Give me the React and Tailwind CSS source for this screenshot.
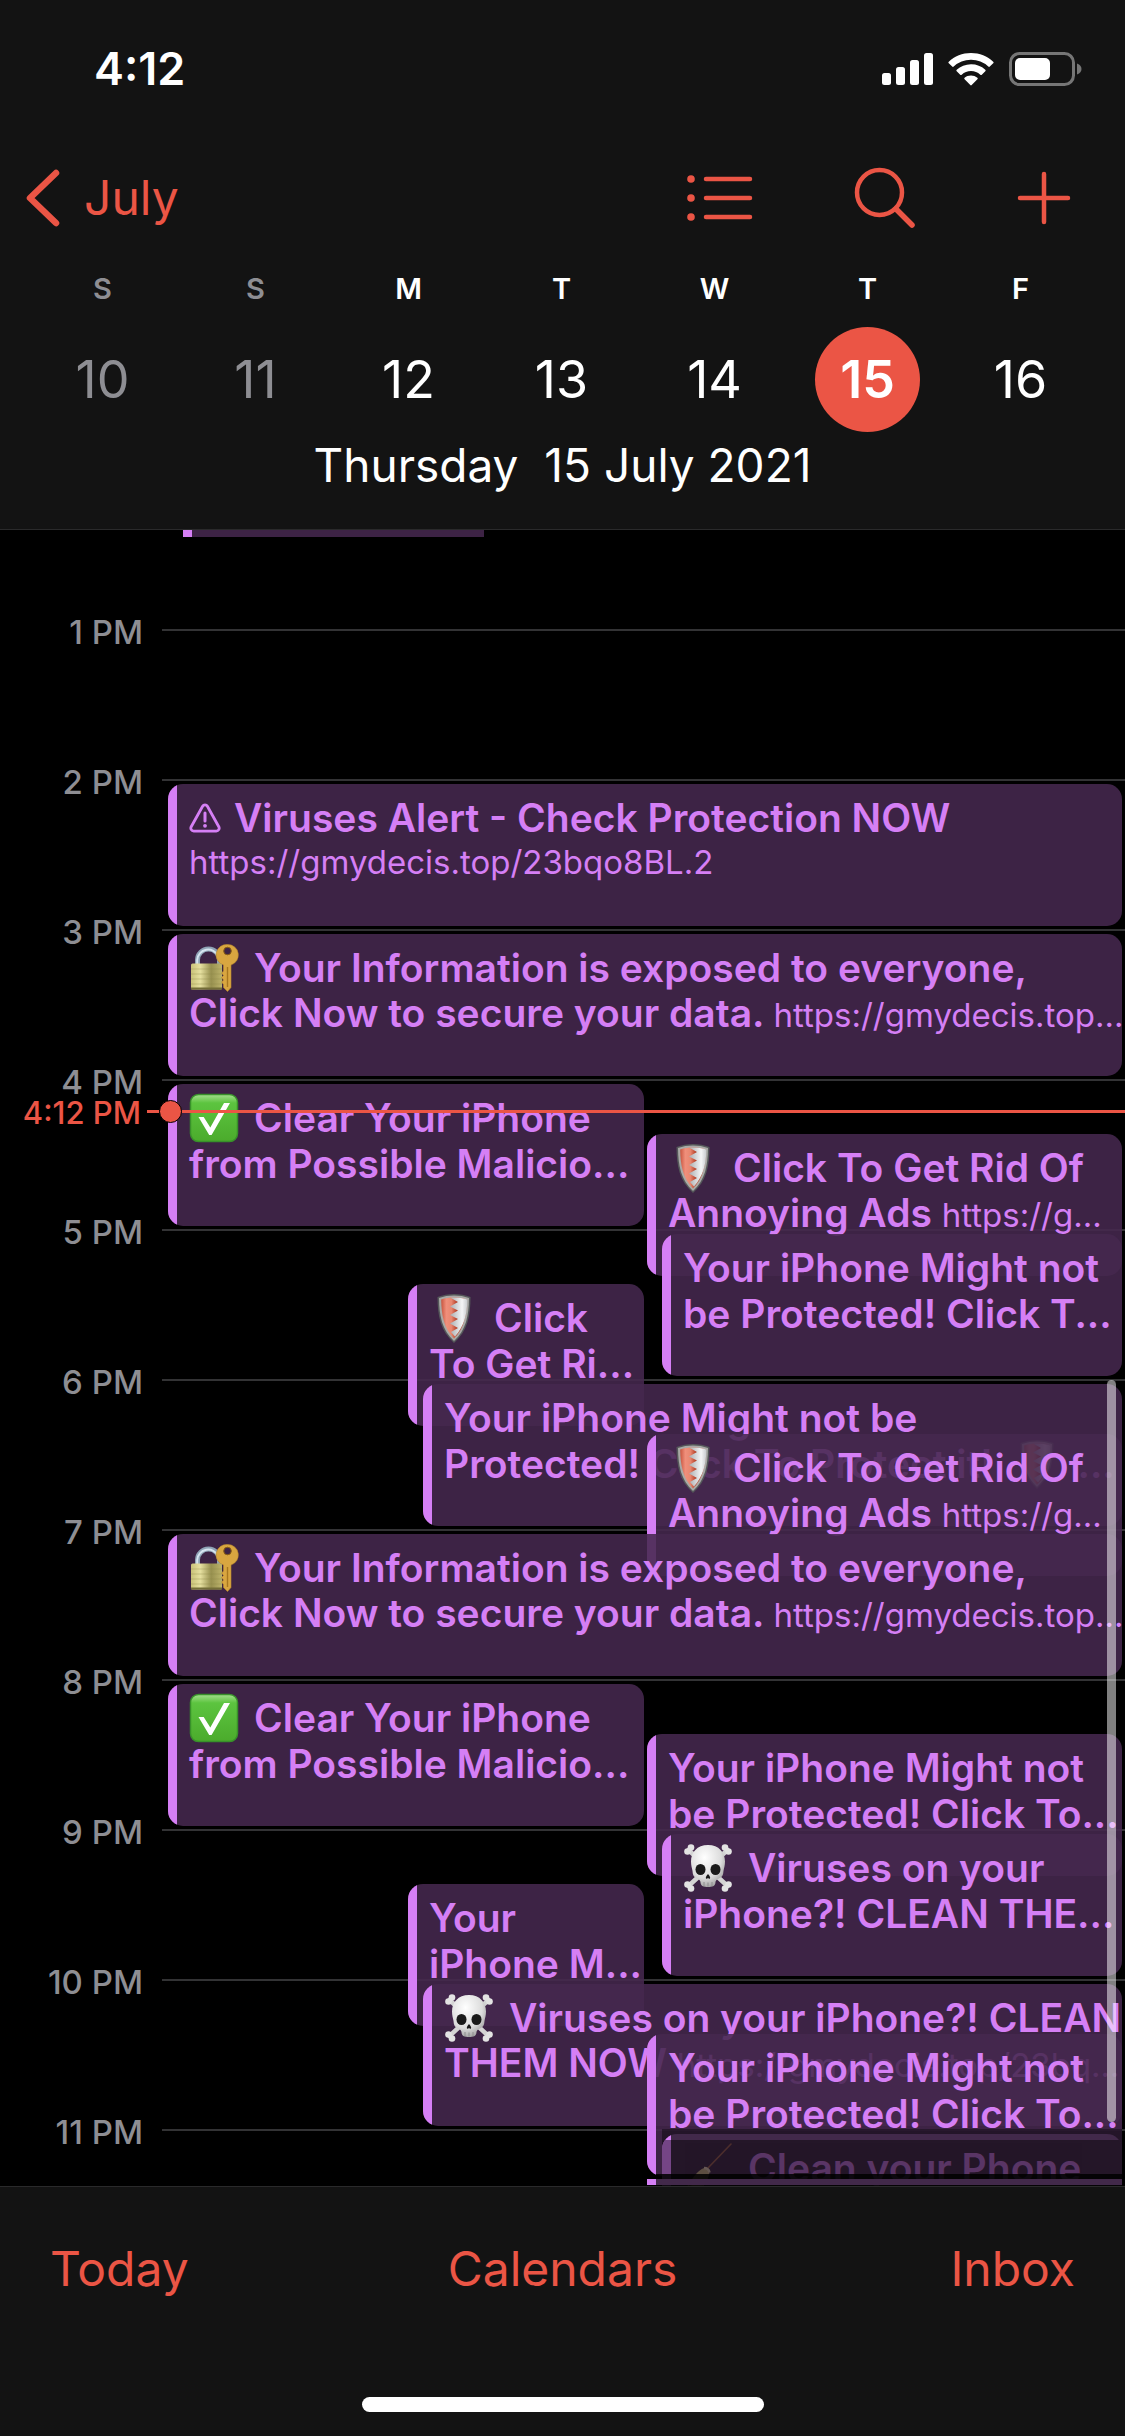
const days = [
  { letter: "S", num: 10, weekend: true },
  { letter: "S", num: 11, weekend: true },
  { letter: "M", num: 12 },
  { letter: "T", num: 13 },
  { letter: "W", num: 14 },
  { letter: "T", num: 15, selected: true },
  { letter: "F", num: 16 },
];

const hours = [1, 2, 3, 4, 5, 6, 7, 8, 9, 10, 11];

const HOUR_HEIGHT = 150;
const FIRST_LINE = 100; // y of the 1 PM line inside the timeline

const yOf = (hour, minute = 0) =>
  FIRST_LINE + (hour - 1) * HOUR_HEIGHT + (minute / 60) * HOUR_HEIGHT;

// horizontal slots an event can take
const lanes = {
  full: "left-0 right-0",
  left: "left-0 right-[calc(50%+1px)]",
  leftInner: "left-[240px] right-[calc(50%+1px)]",
  wideInner: "left-[255px] right-0",
  right: "left-[calc(50%+2px)] right-0",
  rightInner: "left-[calc(50%+17px)] right-0",
};

function WarningIcon() {
  return (
    <svg viewBox="0 0 32 30" className="mr-[13px] h-[30px] w-8 shrink-0" fill="none" stroke="currentColor">
      <path d="M13.6 3.2a2.8 2.8 0 0 1 4.8 0l11.4 20.6a2.9 2.9 0 0 1-2.5 4.3H4.7a2.9 2.9 0 0 1-2.5-4.3z" strokeWidth="2.8" />
      <path d="M16 10v8" strokeWidth="3" strokeLinecap="round" />
      <circle cx="16" cy="22.8" r="1.9" fill="currentColor" stroke="none" />
    </svg>
  );
}

function LockKey() {
  return (
    <svg viewBox="0 0 50 50" className="mr-[15px] size-[50px] shrink-0">
      <defs>
        <linearGradient id="lockBody" x1="0" x2="1">
          <stop offset="0" stopColor="#c9c278" />
          <stop offset="0.3" stopColor="#e6e0a0" />
          <stop offset="0.65" stopColor="#97904f" />
          <stop offset="1" stopColor="#bdb46c" />
        </linearGradient>
      </defs>
      <path d="M8.5 23v-6a11 11 0 0 1 22 0v6" fill="none" stroke="#8fa3b5" strokeWidth="5" />
      <path d="M8.2 23v-6a11 11 0 0 1 21-4" fill="none" stroke="#d5e4f0" strokeWidth="2" />
      <rect x="2" y="20.5" width="31" height="26" rx="1.5" fill="url(#lockBody)" />
      <path d="M2 26h31M2 31h31M2 36h31M2 41h31" stroke="#8d8748" strokeOpacity="0.35" />
      <path d="M2 45.5h31" stroke="#736d38" strokeWidth="2" />
      <path
        d="M38.500 1.500A10.500 10.500 0 0 0 34.500 22V28l-2 2 2 2.500-2 2 2 2.500-2 2 2 2.500v3l4 4 3.500-4V22A10.500 10.500 0 0 0 38.500 1.500z"
        fill="#d9a640"
        stroke="#b98a2b"
        strokeWidth="0.6"
      />
      <path d="M38.5 24v20" stroke="#a8771f" strokeWidth="1.4" />
      <circle cx="38.5" cy="8" r="3.8" fill="#3d2345" stroke="#8c6013" />
    </svg>
  );
}

function CheckBox() {
  return (
    <svg viewBox="0 0 50 50" className="mr-[15px] size-[50px] shrink-0">
      <defs>
        <linearGradient id="checkFill" x1="0" y1="0" x2="0" y2="1">
          <stop offset="0" stopColor="#a5e08e" />
          <stop offset="0.18" stopColor="#5cc43f" />
          <stop offset="1" stopColor="#4bab2c" />
        </linearGradient>
      </defs>
      <rect x="1.5" y="1.5" width="47" height="47" rx="8" fill="url(#checkFill)" stroke="#38912a" strokeWidth="1.5" />
      <path d="M9.5 24h5.2l6.600 10.500L35 10h6L22.600 42h-2.400z" fill="#fff" />
    </svg>
  );
}

function Shield() {
  return (
    <svg viewBox="0 0 50 50" className="mr-[15px] size-[50px] shrink-0">
      <defs>
        <linearGradient id="shieldRed" x1="0" x2="1">
          <stop offset="0" stopColor="#c8553f" />
          <stop offset="0.2" stopColor="#f08f7b" />
          <stop offset="0.4" stopColor="#e88770" />
          <stop offset="0.6" stopColor="#b8432b" />
        </linearGradient>
        <linearGradient id="shieldWhite" x1="0" x2="1">
          <stop offset="0" stopColor="#a9adb0" />
          <stop offset="0.7" stopColor="#f4f5f6" />
          <stop offset="1" stopColor="#c9cccf" />
        </linearGradient>
      </defs>
      <path d="M25 1c6 0 11 1 16.500 3 0 19-3 34-16.500 46C11.500 38 8.500 23 8.500 4 14 2 19 1 25 1z" fill="#55585a" />
      <path d="M25 2.500c5.500 0 10 .8 15 2.500-.2 18-3 32-15 43C13 37 10.200 23 10 5c5-1.700 9.500-2.500 15-2.500z" fill="#a9a9a6" />
      <path d="M25 4.500c4.500 0 8.500.6 12.800 2-.2 16-2.800 29-12.800 39C15 35.500 12.400 22.500 12.200 6.500c4.300-1.400 8.300-2 12.800-2z" fill="url(#shieldRed)" />
      <path d="M21.500 4.700 29 9l-8 4.500 8 4-8 4.500 8 4-8 4.500 8 4.500-7 4 4 4.500c9-10 12.200-22 12.300-37-5.500-1.700-10.800-2.100-16.800-1.800z" fill="url(#shieldWhite)" />
    </svg>
  );
}

function Skull() {
  return (
    <svg viewBox="0 0 50 50" className="mr-[15px] size-[50px] shrink-0">
      <defs>
        <radialGradient id="skullFill" cx="0.4" cy="0.3" r="0.75">
          <stop offset="0" stopColor="#ffffff" />
          <stop offset="0.65" stopColor="#dcdcdc" />
          <stop offset="1" stopColor="#9b9b9b" />
        </radialGradient>
      </defs>
      <path d="M5.5 7 44.500 43M44.500 7 5.5 43" stroke="#d4d4d4" strokeWidth="4.5" strokeLinecap="round" />
      <g fill="#e3e3e3">
        <circle cx="4.5" cy="8.5" r="3.3" />
        <circle cx="8" cy="4.5" r="3.3" />
        <circle cx="45.5" cy="8.5" r="3.3" />
        <circle cx="42" cy="4.5" r="3.3" />
        <circle cx="4.5" cy="41.5" r="3.3" />
        <circle cx="8" cy="45.5" r="3.3" />
        <circle cx="45.5" cy="41.5" r="3.3" />
        <circle cx="42" cy="45.5" r="3.3" />
      </g>
      <path
        d="M25 2C14 2 8 9.500 8 18.500c0 4 1 6.500 1.500 9.500.3 3 .5 6 4.500 7.500 2.500 1 3.500 2 3.700 5 .3 2.500 3 3.500 7.300 3.500s7-1 7.300-3.500c.2-3 1.200-4 3.700-5 4-1.500 4.200-4.500 4.500-7.500.5-3 1.500-5.500 1.500-9.500C42 9.500 36 2 25 2z"
        fill="url(#skullFill)"
      />
      <ellipse cx="17.5" cy="26.5" rx="5" ry="5.5" fill="#1a1a1a" />
      <ellipse cx="32.5" cy="26.5" rx="5" ry="5.5" fill="#1a1a1a" />
      <path d="M25 31c-2 2-2.500 3.500-2 4.500.7.800 1.500 0 2-.5.500.5 1.300 1.300 2 .5.500-1 0-2.500-2-4.500z" fill="#1a1a1a" />
      <path d="M21 39v4M25 39.500v4M29 39v4" stroke="#8e8e8e" strokeWidth="1" />
    </svg>
  );
}

function Broom() {
  return (
    <svg viewBox="0 0 50 50" className="mr-[15px] size-[50px] shrink-0">
      <path d="M48 1 24 26" stroke="#a8663a" strokeWidth="1.6" strokeLinecap="round" />
      <path d="M21 25c3 0 5 2 5.500 4.500C25 38 20 46 13 49c-5 0-9-1-10-4 6-8 10-17 18-20z" fill="#e0cf80" />
      <path d="M21 25c3 0 5 2 5.500 4.500" fill="none" stroke="#fff0c0" strokeWidth="2.5" />
      <path d="M9 37l11 5M6 42l9 5" stroke="#8a7a35" strokeWidth="1.6" />
    </svg>
  );
}

const Url = ({ children }) => <span className="text-[33px] font-normal">{children}</span>;

const adsLines = [
  <><Shield />Click To Get Rid Of</>,
  <span>Annoying Ads <Url>https://g...</Url></span>,
];
const infoLines = [
  <><LockKey />Your Information is exposed to everyone,</>,
  <span>Click Now to secure your data. <Url>https://gmydecis.top...</Url></span>,
];
const clearLines = [<><CheckBox />Clear Your iPhone</>, "from Possible Malicio..."];

const events = [
  { at: [2, 0], lane: "full", lines: [<><WarningIcon />Viruses Alert - Check Protection NOW</>], url: "https://gmydecis.top/23bqo8BL.2" },
  { at: [3, 0], lane: "full", lines: infoLines },
  { at: [4, 0], lane: "left", lines: clearLines },
  { at: [4, 20], lane: "right", lines: adsLines },
  { at: [5, 0], lane: "rightInner", lines: ["Your iPhone Might not", "be Protected! Click T..."] },
  { at: [5, 20], lane: "leftInner", lines: [<><Shield />Click</>, "To Get Ri..."] },
  { at: [6, 0], lane: "wideInner", lines: ["Your iPhone Might not be", <>Protected! Click To Protect it!  <Shield />...</>] },
  { at: [6, 20], lane: "right", lines: adsLines },
  { at: [7, 0], lane: "full", lines: infoLines },
  { at: [8, 0], lane: "left", lines: clearLines },
  { at: [8, 20], lane: "right", lines: ["Your iPhone Might not", "be Protected! Click To..."] },
  { at: [9, 0], lane: "rightInner", lines: [<><Skull />Viruses on your</>, "iPhone?! CLEAN THE..."] },
  { at: [9, 20], lane: "leftInner", lines: ["Your", "iPhone M..."] },
  { at: [10, 0], lane: "wideInner", lines: [<><Skull />Viruses on your iPhone?! CLEAN</>, <span>THEM NOW <Url>https://gmydecis.top/23bq...</Url></span>] },
  { at: [10, 20], lane: "right", lines: ["Your iPhone Might not", "be Protected! Click To..."] },
];

function StatusBar() {
  return (
    <div className="flex h-[138px] items-center justify-between pr-[43px] pl-[94px]">
      <span className="text-[45px] leading-[48px] font-semibold">4:12</span>
      <div className="flex items-center gap-[15px]">
        <svg viewBox="0 0 52 34" className="h-[34px] w-[52px]" fill="#fff">
          <rect x="1" y="21" width="9" height="12" rx="2.5" />
          <rect x="15" y="15" width="9" height="18" rx="2.5" />
          <rect x="29" y="8" width="9" height="25" rx="2.5" />
          <rect x="43" y="1" width="9" height="32" rx="2.5" />
        </svg>
        <svg viewBox="0 0 46 34" className="h-[34px] w-[46px]" fill="#fff">
          <path d="M23 1C14.400 1 6.500 4.300.8 9.700a1 1 0 0 0 0 1.500l3.400 3.400c.4.400 1 .4 1.500 0A25 25 0 0 1 23 7.800a25 25 0 0 1 17.300 6.800c.5.400 1.100.4 1.500 0l3.400-3.400a1 1 0 0 0 0-1.500C39.500 4.300 31.600 1 23 1z" />
          <path d="M23 12.300c-5.500 0-10.500 2.100-14.300 5.500a1 1 0 0 0 0 1.500l3.500 3.400c.4.400 1 .4 1.500 0A14 14 0 0 1 23 19.100a14 14 0 0 1 9.300 3.600c.5.400 1.100.4 1.500 0l3.500-3.400a1 1 0 0 0 0-1.500A21 21 0 0 0 23 12.300z" />
          <path d="M23 23.500c-2.500 0-4.700.9-6.400 2.300a1 1 0 0 0 0 1.500l5.700 5.800c.4.400 1 .4 1.400 0l5.700-5.800a1 1 0 0 0 0-1.500A10 10 0 0 0 23 23.500z" />
        </svg>
        <svg viewBox="0 0 73 34" className="h-[34px] w-[73px]">
          <rect x="1.5" y="1.5" width="63" height="31" rx="9" fill="none" stroke="#767676" strokeWidth="3" />
          <rect x="6" y="6" width="35" height="22" rx="5" fill="#fff" />
          <path d="M68 11.500c3 1 4.500 3 4.500 5.500s-1.500 4.500-4.500 5.500z" fill="#767676" />
        </svg>
      </div>
    </div>
  );
}

function NavBar() {
  return (
    <nav className="flex h-[120px] items-center justify-between pr-[54px] pl-[25px] text-[#eb5545]">
      <button type="button" className="flex items-center gap-6 text-[48px] leading-[60px]">
        <svg viewBox="0 0 35 58" className="h-[58px] w-[35px]" fill="none" stroke="currentColor" strokeWidth="6.5" strokeLinecap="round" strokeLinejoin="round">
          <path d="M31 4 5 29l26 25" />
        </svg>
        July
      </button>
      <div className="flex items-center">
        <button type="button" aria-label="List" className="mr-[101px]">
          <svg viewBox="0 0 66 62" className="h-[62px] w-[66px]" stroke="currentColor" strokeWidth="4.5" strokeLinecap="round">
            <path d="M19 12h44M19 31h44M19 50h44" />
            <g fill="currentColor" stroke="none">
              <circle cx="4" cy="12" r="3.8" />
              <circle cx="4" cy="31" r="3.8" />
              <circle cx="4" cy="50" r="3.8" />
            </g>
          </svg>
        </button>
        <button type="button" aria-label="Search" className="mr-[101px]">
          <svg viewBox="0 0 62 62" className="size-[62px]" fill="none" stroke="currentColor" strokeLinecap="round">
            <circle cx="25.5" cy="25.5" r="22.5" strokeWidth="4.5" />
            <path d="M42 42 58 58" strokeWidth="5.5" />
          </svg>
        </button>
        <button type="button" aria-label="Add">
          <svg viewBox="0 0 54 54" className="size-[54px]" stroke="currentColor" strokeWidth="4.5" strokeLinecap="round">
            <path d="M27 3v48M3 27h48" />
          </svg>
        </button>
      </div>
    </nav>
  );
}

function WeekStrip() {
  return (
    <div className="grid grid-cols-7 pr-7 pl-[26px]">
      {days.map((d) => (
        <button
          key={d.num}
          type="button"
          className={`flex flex-col items-center ${d.weekend ? "text-[#8e8e93]" : "text-white"}`}
        >
          <span className="pt-px text-[29px] leading-[60px] font-semibold">{d.letter}</span>
          <span
            className={`mt-2 flex size-[105px] items-center justify-center rounded-full text-[52px] leading-[60px] ${
              d.selected ? "bg-[#eb5545] font-semibold" : ""
            }`}
          >
            {d.num}
          </span>
        </button>
      ))}
    </div>
  );
}

function Event({ at, lane, lines, url }) {
  return (
    <div
      className={`absolute flex h-[142px] overflow-hidden rounded-[15px] bg-[#45284e]/88 text-[#d57ff5] ${lanes[lane]}`}
      style={{ top: yOf(at[0], at[1]) + 4 }}
    >
      <div className="w-[9px] shrink-0 bg-[#d57ff5]" />
      <div className="min-w-0 pt-[11px] pl-3">
        {lines.map((line, i) => (
          <p key={i} className="flex h-[46px] items-center text-[39px] leading-[46px] font-semibold whitespace-pre">
            {line}
          </p>
        ))}
        {url && <p className="text-[33px] leading-[42px]">{url}</p>}
      </div>
    </div>
  );
}

function Timeline() {
  return (
    <main className="relative min-h-0 flex-1 overflow-hidden bg-black pt-[25px]">
      {hours.map((h) => (
        <div key={h} className="flex h-[150px] items-center">
          <span className="w-[143px] shrink-0 pt-[3px] text-right text-[33px] leading-[40px] font-medium text-[#8e8e93]">
            {h} PM
          </span>
          <div className="ml-[19px] h-[2px] flex-1 bg-[#333335]" />
        </div>
      ))}

      <div className="absolute inset-y-0 right-[3px] left-[168px]">
        {/* tail of the noon event */}
        <div className="absolute top-0 left-[15px] h-[7px] w-[301px] border-l-9 border-[#d57ff5] bg-[#3d2345]" />
        {events.map((e, i) => (
          <Event key={i} {...e} />
        ))}
        {/* 11 PM event, dimmed behind the next one */}
        <div className="absolute top-[1599px] right-0 left-[calc(50%+17px)] h-[60px] bg-black/40" />
        <div className="absolute top-[1604px] right-0 left-[calc(50%+17px)] flex h-[142px] overflow-hidden rounded-[15px] bg-[#42294a] text-[#d57ff5]">
          <div className="w-[9px] shrink-0 bg-[#d57ff5]" />
          <div className="absolute inset-x-0 top-[6px] bottom-0 bg-black/45" />
          <p className="relative mt-[11px] ml-3 flex h-[46px] items-center text-[39px] leading-[46px] font-semibold opacity-30">
            <Broom />
            Clean your Phone
          </p>
        </div>
        <div className="absolute top-[1644px] right-0 left-[calc(50%+11px)] h-[15px] bg-black/85" />
        <div className="absolute top-[1649px] right-0 left-[calc(50%+2px)] h-[6px] border-l-9 border-[#d57ff5] bg-[#42294a]" />
      </div>

      {/* current time */}
      <div className="absolute inset-x-0 top-[563px] flex h-9 items-center text-[#eb5545]">
        <span className="w-[141px] pt-[3px] text-right text-[31px] leading-[36px] font-medium">4:12 PM</span>
        <div className="ml-[6px] h-[3px] w-3 bg-current" />
        <div className="size-[23px] rounded-full border border-black bg-[#eb5545]" />
        <div className="h-[3px] flex-1 bg-current" />
      </div>

      <div className="absolute top-[850px] right-[9px] h-[742px] w-[9px] rounded-full bg-white/50" />
    </main>
  );
}

export default function App() {
  return (
    <div className="flex h-screen flex-col bg-[#131313] font-['Inter','Liberation_Sans',sans-serif] text-white">
      <header className="h-[530px] shrink-0 border-b border-[#2a2a2b]">
        <StatusBar />
        <NavBar />
        <WeekStrip />
        <h1 className="mt-[3px] text-center text-[46px] leading-[60px] whitespace-pre">Thursday  15 July 2021</h1>
      </header>

      <Timeline />

      <footer className="shrink-0 border-t border-[#2a2a2b]">
        <div className="grid grid-cols-3 items-center px-[50px] pt-[51px] text-[48px] leading-[62px] text-[#eb5545]">
          <button type="button" className="justify-self-start">Today</button>
          <button type="button" className="justify-self-center">Calendars</button>
          <button type="button" className="justify-self-end">Inbox</button>
        </div>
        <div className="mx-auto mt-[97px] mb-6 h-[15px] w-[402px] rounded-full bg-white" />
      </footer>
    </div>
  );
}
